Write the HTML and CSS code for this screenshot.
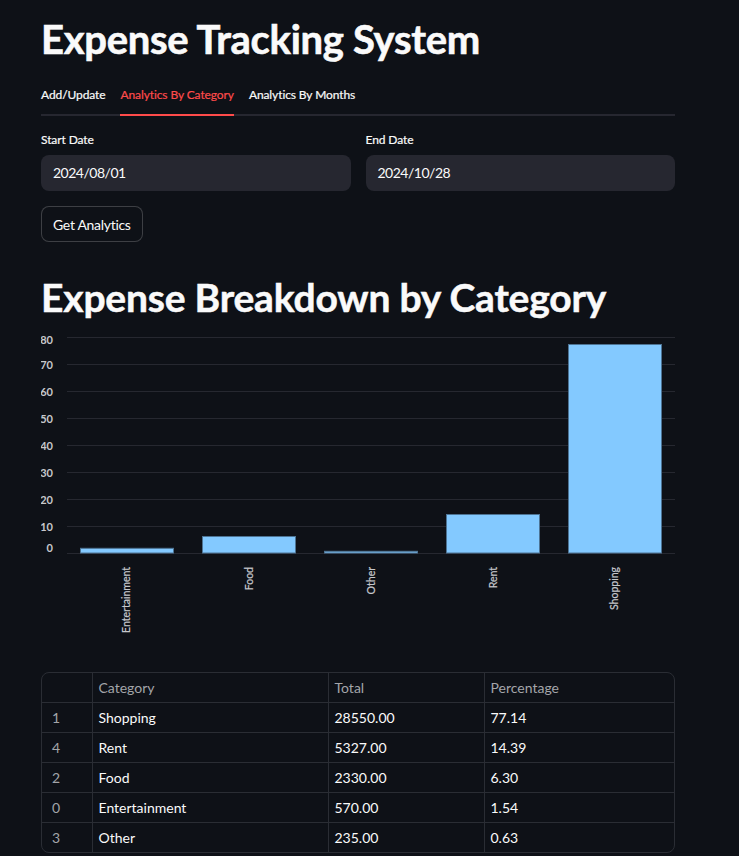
FILE: index.html
```html
<!DOCTYPE html>
<html lang="en">
<head>
<meta charset="utf-8">
<title>Expense Tracking System</title>
<link rel="stylesheet" href="styles.css">
</head>
<body>
<main class="app">
  <h1 class="title">Expense Tracking System</h1>

  <nav class="tabs">
    <span class="tab">Add/Update</span>
    <span class="tab active">Analytics By Category</span>
    <span class="tab">Analytics By Months</span>
  </nav>

  <div class="dates">
    <div class="field">
      <label class="field-label">Start Date</label>
      <div class="input">2024/08/01</div>
    </div>
    <div class="field">
      <label class="field-label">End Date</label>
      <div class="input">2024/10/28</div>
    </div>
  </div>

  <button class="btn">Get Analytics</button>

  <h2 class="subtitle">Expense Breakdown by Category</h2>

  <svg class="chart" width="634" height="320" viewBox="0 0 634 320">
    <g class="grid">
      <line x1="26" x2="634" y1="8.5" y2="8.5"/>
      <line x1="26" x2="634" y1="35.5" y2="35.5"/>
      <line x1="26" x2="634" y1="62.5" y2="62.5"/>
      <line x1="26" x2="634" y1="89.5" y2="89.5"/>
      <line x1="26" x2="634" y1="116.5" y2="116.5"/>
      <line x1="26" x2="634" y1="143.5" y2="143.5"/>
      <line x1="26" x2="634" y1="170.5" y2="170.5"/>
      <line x1="26" x2="634" y1="197.5" y2="197.5"/>
      <line x1="26" x2="634" y1="224.5" y2="224.5"/>
    </g>
    <g class="ylabels">
      <text x="12" y="15">80</text>
      <text x="12" y="39.5">70</text>
      <text x="12" y="66.5">60</text>
      <text x="12" y="93.5">50</text>
      <text x="12" y="120.5">40</text>
      <text x="12" y="147.5">30</text>
      <text x="12" y="174.5">20</text>
      <text x="12" y="201.5">10</text>
      <text x="12" y="223">0</text>
    </g>
    <g class="bars">
      <rect x="39.5" y="219.3" width="93" height="4.7"/>
      <rect x="161.5" y="207.5" width="93" height="16.5"/>
      <rect x="283.5" y="222.3" width="93" height="1.7"/>
      <rect x="405.5" y="185.5" width="93" height="38.5"/>
      <rect x="527.5" y="15.5" width="93" height="208.5"/>
    </g>
    <g class="xlabels">
      <text transform="translate(89 238) rotate(-90)">Entertainment</text>
      <text transform="translate(212 238) rotate(-90)">Food</text>
      <text transform="translate(334 238) rotate(-90)">Other</text>
      <text transform="translate(456 238) rotate(-90)">Rent</text>
      <text transform="translate(577 238) rotate(-90)">Shopping</text>
    </g>
  </svg>

  <div class="table-wrap">
    <table class="data">
      <colgroup>
        <col class="col-idx">
        <col class="col-cat">
        <col class="col-tot">
        <col class="col-pct">
      </colgroup>
      <thead>
        <tr><th class="idx"></th><th>Category</th><th>Total</th><th>Percentage</th></tr>
      </thead>
      <tbody>
        <tr><td class="idx">1</td><td>Shopping</td><td>28550.00</td><td>77.14</td></tr>
        <tr><td class="idx">4</td><td>Rent</td><td>5327.00</td><td>14.39</td></tr>
        <tr><td class="idx">2</td><td>Food</td><td>2330.00</td><td>6.30</td></tr>
        <tr><td class="idx">0</td><td>Entertainment</td><td>570.00</td><td>1.54</td></tr>
        <tr><td class="idx">3</td><td>Other</td><td>235.00</td><td>0.63</td></tr>
      </tbody>
    </table>
  </div>
</main>
</body>
</html>
```

FILE: styles.css
```css
html, body {
  margin: 0;
  padding: 0;
  background: #0e1117;
}

body {
  color: #fafafa;
  font-family: "Lato", "Noto Sans", sans-serif;
  height: 856px;
  overflow: hidden;
}

.app {
  width: 634px;
  padding: 0 0 0 41px;
}

.title {
  margin: 0;
  padding-top: 13px;
  font-size: 40px;
  line-height: 52px;
  font-weight: 700;
  letter-spacing: -0.3px;
  -webkit-text-stroke: 0.6px #fafafa;
}

.tabs {
  display: flex;
  gap: 15px;
  margin-top: 10px;
  height: 41px;
  border-bottom: 2px solid #262730;
  box-sizing: border-box;
}

.tab {
  font-size: 12px;
  letter-spacing: -0.1px;
  line-height: 40px;
  height: 40px;
  color: #fafafa;
  -webkit-text-stroke: 0.2px currentColor;
}

.tab.active {
  color: #ff4b4b;
  box-shadow: inset 0 -2px 0 #ff4b4b;
  height: 41px;
}

.dates {
  display: flex;
  gap: 15px;
  margin-top: 15px;
}

.field {
  flex: 1;
  display: flex;
  flex-direction: column;
}

.field-label {
  font-size: 12px;
  letter-spacing: -0.1px;
  line-height: 18px;
  height: 24px;
  -webkit-text-stroke: 0.2px currentColor;
}

.input {
  height: 36px;
  background: #262730;
  border-radius: 8px;
  padding: 0 12px;
  font-size: 14px;
  letter-spacing: -0.5px;
  line-height: 36px;
}

.btn {
  display: block;
  margin-top: 15px;
  height: 36px;
  padding: 0 11px;
  background: #0e1117;
  color: #fafafa;
  border: 1px solid rgba(250, 250, 250, 0.2);
  border-radius: 8px;
  font-family: inherit;
  font-size: 14px;
  letter-spacing: -0.3px;
}

.subtitle {
  margin: 32px 0 0;
  font-size: 39px;
  line-height: 46px;
  font-weight: 700;
  letter-spacing: -0.2px;
  -webkit-text-stroke: 0.5px #fafafa;
}

.chart {
  display: block;
  margin-top: 9px;
}

.grid line {
  stroke: #262830;
  stroke-width: 1;
}

.ylabels text {
  fill: #c6c8cc;
  font-size: 11px;
  font-weight: 700;
  text-anchor: end;
}

.xlabels text {
  fill: #c6c8cc;
  font-size: 10.5px;
  text-anchor: end;
  stroke: #c6c8cc;
  stroke-width: 0.2px;
}

.bars rect {
  fill: #83c9ff;
  stroke: #4d7393;
  stroke-width: 1;
}

.table-wrap {
  margin-top: 23px;
  border: 1px solid #2a2d34;
  border-radius: 8px;
  overflow: hidden;
}

.data {
  width: 100%;
  border-collapse: collapse;
  table-layout: fixed;
  font-size: 14px;
}

.col-idx { width: 50px; }
.col-cat { width: 236px; }
.col-tot { width: 156px; }

.data th,
.data td {
  height: 29px;
  padding: 0 6px;
  text-align: left;
  border-right: 1px solid #2a2d34;
  border-bottom: 1px solid #2a2d34;
  font-weight: 400;
  white-space: nowrap;
}

.data th:last-child,
.data td:last-child {
  border-right: none;
}

.data tbody tr:last-child td {
  border-bottom: none;
}

.data th {
  color: #a3a5a9;
}

.data td.idx {
  color: #a3a5a9;
  padding-left: 10px;
}
```
